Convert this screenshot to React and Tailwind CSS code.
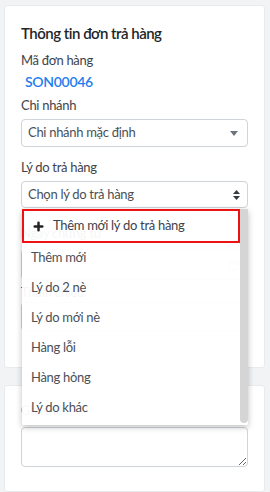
import { Plus } from 'lucide-react';

const reasons = ['Thêm mới', 'Lý do 2 nè', 'Lý do mới nè', 'Hàng lỗi', 'Hàng hỏng', 'Lý do khác'];

function Label({ children, className = '' }) {
  return <div className={`text-[13px] leading-[18px] tracking-[-0.3px] text-[#3d4349] ${className}`}>{children}</div>;
}

export default function App() {
  return (
    <div className="min-h-[492px] bg-[#f2f3f5] px-[4px] pt-[5px] pr-[5px] font-['Lato','Open_Sans',sans-serif]">
      <div className="relative rounded-[3px] border border-[#e8eaed] bg-white px-[16px] pt-[17px] pb-[36px]">
        <h3 className="text-[15px] leading-[20px] font-semibold tracking-[-0.5px] text-[#212529]">Thông tin đơn trả hàng</h3>

        <Label className="mt-[8px]">Mã đơn hàng</Label>
        <div className="mt-[3px] pl-[4px] text-[14px] leading-[20px] font-semibold tracking-[-0.3px] text-[#1e7cf0]">SON00046</div>

        <Label className="mt-[4px]">Chi nhánh</Label>
        <div className="mt-[5px] flex h-[28px] items-center justify-between rounded-[4px] border border-[#ced4da] px-[6px] text-[13px] tracking-[-0.3px] text-[#495057]">
          <span>Chi nhánh mặc định</span>
          <svg width="8" height="5" viewBox="0 0 8 5" className="mr-[3px]"><path d="M0 0h8L4 5z" fill="#6c757d" /></svg>
        </div>

        <Label className="mt-[11px]">Lý do trả hàng</Label>
        <div className="mt-[5px] flex h-[27px] items-center justify-between rounded-[4px] border border-[#ced4da] px-[6px] text-[13px] tracking-[-0.3px] text-[#495057]">
          <span>Chọn lý do trả hàng</span>
          <svg width="7" height="10" viewBox="0 0 7 10" className="mr-[1px]">
            <path d="M0 4h7L3.5 0z M0 6h7L3.5 10z" fill="#343a40" />
          </svg>
        </div>

        <Label className="mt-[16px]">Ngày chứng từ</Label>
        <div className="mt-[7px] flex h-[31px] items-center justify-end rounded-[4px] border border-[#ced4da] px-[8px]">
          <svg width="10" height="11" viewBox="0 0 10 11"><rect x="0.5" y="1.5" width="9" height="9" rx="1" fill="none" stroke="#adb5bd" /><path d="M0 4h10" stroke="#adb5bd" /></svg>
        </div>

        <Label className="mt-[3px]">Tham chiếu</Label>
        <div className="mt-[1px] h-[29px] rounded-[4px] border border-[#ced4da]" />

        <div className="absolute left-[17px] top-[203px] z-10 w-[226px] rounded-[2px] bg-white/[0.95] pb-[2px] shadow-[0_2px_6px_rgba(0,0,0,0.25)]">
          <div className="flex">
            <div className="flex-1">
              <div className="flex h-[34px] items-center border-2 border-[#ee1111] pl-[8px] text-[13px] tracking-[-0.3px] text-[#3d4349]">
                <Plus size={13} strokeWidth={4.5} className="text-[#222]" />
                <span className="ml-[8px]">Thêm mới lý do trả hàng</span>
              </div>
              {reasons.map((r) => (
                <div key={r} className="flex h-[30px] items-center pl-[9px] text-[13px] tracking-[-0.3px] text-[#4a5056]">{r}</div>
              ))}
            </div>
            <div className="w-[8px] rounded-b-[4px] bg-[#d5d5d5]" />
          </div>
        </div>
      </div>

      <div className="mt-[17px] h-[107px] rounded-[3px] border border-[#e8eaed] bg-white px-[16px] pt-[15px]">
        <Label className="text-[#5a6066]">Ghi chú</Label>
        <textarea className="mt-[8px] block h-[40px] w-full resize-y rounded-[4px] border border-[#ced4da]" />
      </div>
    </div>
  );
}
